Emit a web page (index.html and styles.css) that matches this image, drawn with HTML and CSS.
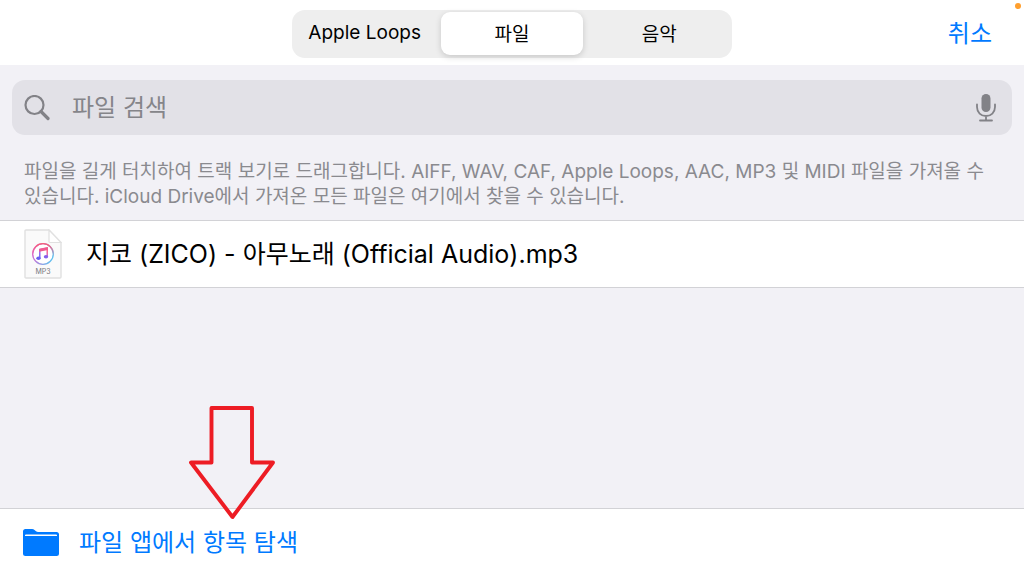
FILE: index.html
```html
<!DOCTYPE html>
<html lang="ko">
<head>
<meta charset="UTF-8">
<meta name="viewport" content="width=device-width, initial-scale=1.0">
<title>파일</title>
<link rel="stylesheet" href="styles.css">
</head>
<body>

<header class="topbar">
    <nav class="tabs">
        <button type="button" class="tab">Apple Loops</button>
        <button type="button" class="tab active" aria-pressed="true">파일</button>
        <button type="button" class="tab">음악</button>
    </nav>
    <button type="button" class="cancel">취소</button>
    <span class="mic-dot"></span>
</header>

<main class="content">
    <form class="search">
        <svg class="search-icon" viewBox="0 0 26 26" aria-hidden="true">
            <circle cx="10.5" cy="10" r="9" fill="none" stroke="#828287" stroke-width="2.2"/>
            <path d="M17 16.500 L24 23.500" stroke="#828287" stroke-width="3.2" stroke-linecap="round"/>
        </svg>
        <input type="text" class="search-input" placeholder="파일 검색" aria-label="파일 검색">
        <button type="button" class="mic" aria-label="음성 입력">
            <svg viewBox="0 0 20 28" width="20" height="28">
                <rect x="5.5" y="0" width="9" height="18" rx="4.5" fill="#828287"/>
                <path d="M1 10.500 V13 C1 18.500 5 22 10 22 S19 18.500 19 13 V10.500 M10 22 V26.500 M4 26.500 H16" fill="none" stroke="#828287" stroke-width="1.8" stroke-linecap="round"/>
            </svg>
        </button>
    </form>

    <p class="help">파일을 길게 터치하여 트랙 보기로 드래그합니다. AIFF, WAV, CAF, Apple Loops, AAC, MP3 및 MIDI 파일을 가져올 수 있습니다. iCloud Drive에서 가져온 모든 파일은 여기에서 찾을 수 있습니다.</p>

    <ul class="files">
        <li class="file">
            <svg class="file-icon" viewBox="0 0 38 50" aria-hidden="true">
                <defs>
                    <linearGradient id="ring" x1="0" y1="0.3" x2="1" y2="0.7">
                        <stop offset="0" stop-color="#e05fd0"/>
                        <stop offset="1" stop-color="#5cc4f0"/>
                    </linearGradient>
                    <linearGradient id="ringTop" x1="0" y1="0" x2="0" y2="1">
                        <stop offset="0" stop-color="#fb5c74"/>
                        <stop offset="0.6" stop-color="#fb5c74" stop-opacity="0"/>
                    </linearGradient>
                    <linearGradient id="note" x1="1" y1="0" x2="0" y2="1">
                        <stop offset="0.1" stop-color="#fb5c74"/>
                        <stop offset="0.5" stop-color="#c65be0"/>
                        <stop offset="1" stop-color="#5a62f5"/>
                    </linearGradient>
                </defs>
                <path d="M2 1 H25 L37 13.500 V48 Q37 49 36 49 H2 Q1 49 1 48 V2 Q1 1 2 1 Z" fill="#fafafa" stroke="#e0e0e0" stroke-width="1.4"/>
                <path d="M25 1 V12.500 Q25 13.500 26 13.500 H37 Z" fill="#fff" stroke="#e0e0e0" stroke-width="1.2"/>
                <circle cx="19" cy="25" r="10.300" fill="#fff" stroke="url(#ring)" stroke-width="1.300"/>
                <circle cx="19" cy="25" r="10.300" fill="none" stroke="url(#ringTop)" stroke-width="1.300"/>
                <path d="M15.800 29 V20.500 L23.200 19 V27.500" fill="none" stroke="url(#note)" stroke-width="1.4"/>
                <path d="M15.200 19.800 L23.900 18 V21 L15.200 22.800 Z" fill="#f05a90"/>
                <ellipse cx="14.500" cy="29.300" rx="2.200" ry="1.800" fill="#6a60f0"/>
                <ellipse cx="22" cy="27.800" rx="2.200" ry="1.800" fill="#8560ea"/>
                <text x="19" y="45" class="file-type">MP3</text>
            </svg>
            <span class="file-name">지코 (ZICO) - 아무노래 (Official Audio).mp3</span>
        </li>
    </ul>
</main>

<footer class="bottombar">
    <a href="#" class="browse">
        <svg class="folder-icon" viewBox="0 0 36 27" aria-hidden="true">
            <path d="M0 24.500 V2.500 Q0 0 2.500 0 H9 Q10.500 0 11.500 1 L13 2.300 Q14 3 15 3 H33.500 Q36 3 36 5.500 V24.500 Q36 27 33.500 27 H2.500 Q0 27 0 24.500 Z" fill="#007aff"/>
            <path d="M2 7 V6.300 Q2 5.500 3 5.500 H33 Q34 5.500 34 6.300 V7 Z" fill="#fff"/>
        </svg>
        <span class="browse-label">파일 앱에서 항목 탐색</span>
    </a>
    <svg class="arrow" viewBox="0 0 86 114" aria-hidden="true">
        <path d="M22.500 2 H63 V56.500 H84 L43.500 111 L2 56.500 H22.500 Z" fill="none" stroke="#ed1c24" stroke-width="3.900" stroke-linejoin="round"/>
    </svg>
</footer>

</body>
</html>
```

FILE: styles.css
```css
* {
    box-sizing: border-box;
}
body {
    margin: 0;
    min-height: 100vh;
    display: flex;
    flex-direction: column;
    background-color: #f2f1f6;
    color: #000;
    font-family: Inter, "Noto Sans CJK KR", sans-serif;
}
button {
    border: 0;
    padding: 0;
    background: none;
    color: inherit;
    font: inherit;
    cursor: pointer;
}

/* 상단 */
.topbar {
    position: relative;
    display: grid;
    grid-template-columns: 1fr 440px 1fr;
    align-items: center;
    padding: 10px 32px 7px;
    background-color: #fff;
}
.tabs {
    grid-column: 2;
    display: grid;
    grid-template-columns: repeat(3, 1fr);
    gap: 6px;
    height: 48px;
    padding: 2px;
    border-radius: 13px;
    background-color: #eee;
}
.tab {
    height: 43px;
    padding-bottom: 2px;
    border-radius: 9px;
    font-size: 19px;
}
.tab.active {
    background-color: #fff;
    box-shadow: 0 2px 6px rgba(0, 0, 0, 0.16);
}
.cancel {
    justify-self: end;
    color: #007aff;
    font-size: 24px;
    line-height: 32px;
}
.mic-dot {
    position: absolute;
    top: 3px;
    right: 3px;
    width: 6px;
    height: 6px;
    border-radius: 50%;
    background-color: #ff9f2e;
}

/* 검색 */
.content {
    flex: 1;
}
.search {
    display: flex;
    align-items: center;
    height: 55px;
    margin: 15px 12px 0;
    padding: 0 16px 0 12px;
    border-radius: 13px;
    background-color: #e2e1e7;
}
.search-icon {
    width: 26px;
    height: 26px;
}
.search-input {
    flex: 1;
    min-width: 0;
    border: 0;
    padding: 0 22px;
    background: none;
    font: inherit;
    font-size: 24px;
    outline: none;
}
.search-input::placeholder {
    color: #85858a;
    opacity: 1;
}
.mic {
    display: flex;
}
.help {
    margin: 24px 24px 11px;
    color: #8a8a8f;
    font-size: 19px;
    line-height: 25px;
}

/* 파일 목록 */
.files {
    margin: 0;
    padding: 0;
    list-style: none;
}
.file {
    display: flex;
    align-items: center;
    gap: 24px;
    height: 68px;
    padding: 0 24px;
    border-top: 1px solid #d2d2d6;
    border-bottom: 1px solid #d2d2d6;
    background-color: #fff;
}
.file-icon {
    width: 38px;
    height: 50px;
}
.file-type {
    fill: #77777a;
    font-size: 7px;
    text-anchor: middle;
}
.file-name {
    padding-bottom: 4px;
    font-size: 25px;
}

/* 하단 */
.bottombar {
    position: relative;
    height: 68px;
    border-top: 1px solid #d2d2d6;
    background-color: #fff;
}
.browse {
    display: flex;
    align-items: center;
    gap: 20px;
    height: 67px;
    padding: 0 23px;
    color: #007aff;
    font-size: 24px;
    text-decoration: none;
}
.browse-label {
    padding-bottom: 4px;
}
.folder-icon {
    width: 36px;
    height: 27px;
}
.arrow {
    position: absolute;
    left: 189px;
    bottom: 56px;
    width: 86px;
    height: 114px;
}
```
